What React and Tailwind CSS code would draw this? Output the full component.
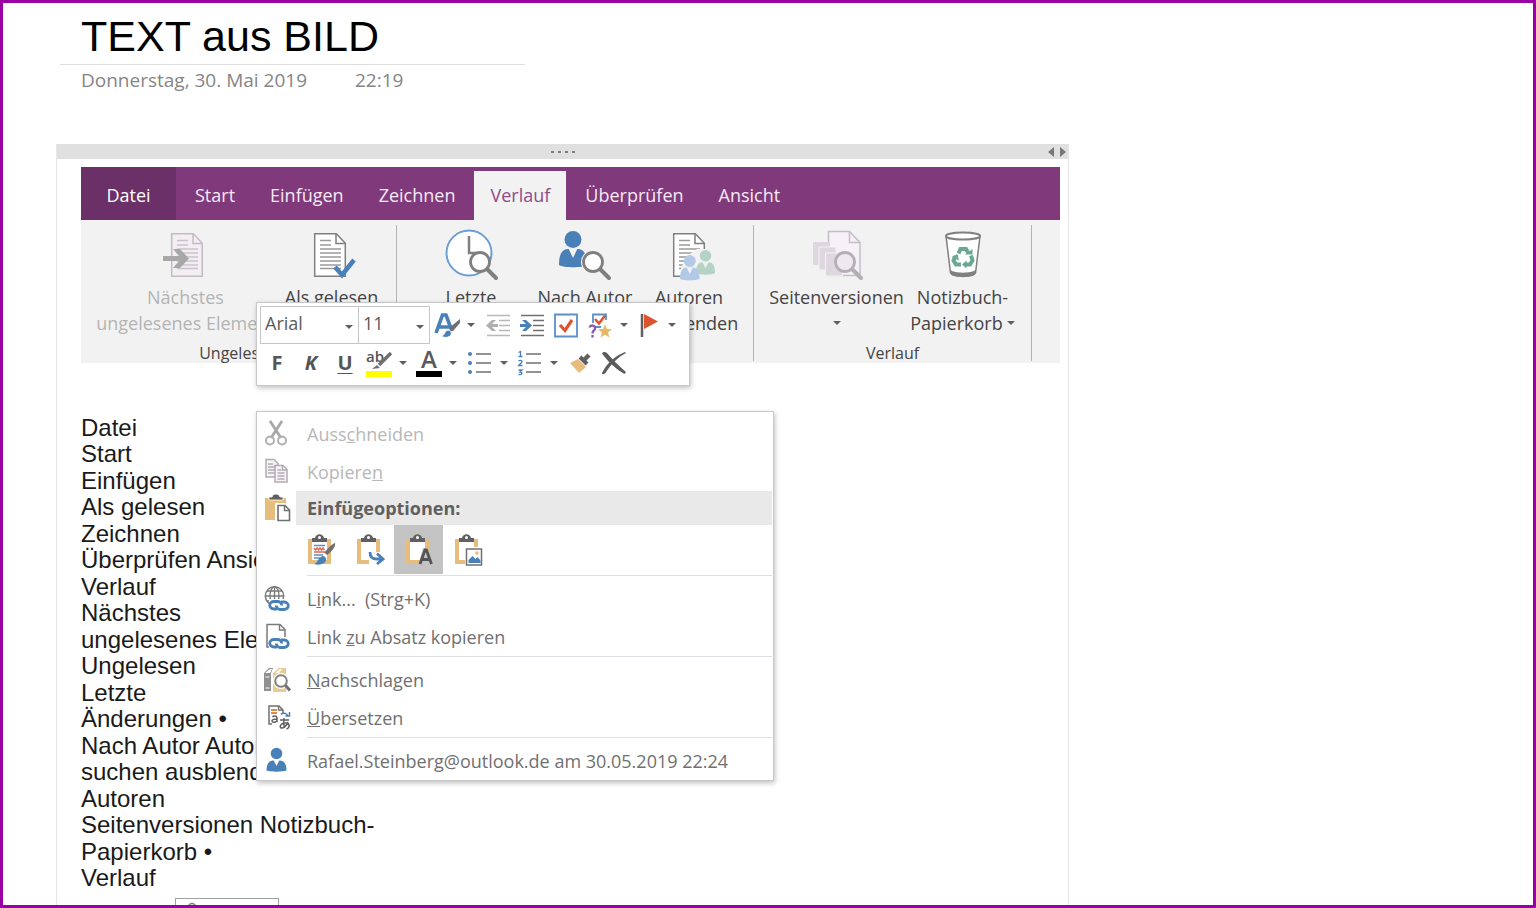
import clsx from 'clsx';

const tabs = ['Datei', 'Start', 'Einfügen', 'Zeichnen', 'Verlauf', 'Überprüfen', 'Ansicht'];

const noteLines = [
  'Datei',
  'Start',
  'Einfügen',
  'Als gelesen',
  'Zeichnen',
  'Überprüfen Ansicht',
  'Verlauf',
  'Nächstes',
  'ungelesenes Element',
  'Ungelesen',
  'Letzte',
  'Änderungen •',
  'Nach Autor Autoren',
  'suchen ausblenden',
  'Autoren',
  'Seitenversionen Notizbuch-',
  'Papierkorb •',
  'Verlauf',
];

function Caret({ className }) {
  return (
    <svg viewBox="0 0 8 4" className={clsx('h-1 w-2 shrink-0', className)} aria-hidden="true">
      <path d="M0 0h8L4 4z" fill="#606060" />
    </svg>
  );
}

/* ---------- ribbon icons ---------- */

function RibbonIcon({ children }) {
  return (
    <svg viewBox="0 0 56 52" className="h-[52px] w-14 shrink-0" fill="none" aria-hidden="true">
      {children}
    </svg>
  );
}

function Sheet({ x, stroke = '#808080', fill = '#fff', line = '#9a9a9a' }) {
  return (
    <g transform={`translate(${x} 4)`}>
      <path d="M.7.7h21.6l9 9.500v33H.7z" fill={fill} stroke={stroke} strokeWidth="1.500" />
      <path d="M22 1v9.500h9" stroke={stroke} strokeWidth="1.500" />
      <path d="M6 7.500h11M6 12h11M6 16h21M6 20h21M6 24h21M6 28h21M6 32h21M6 35.500h21" stroke={line} strokeWidth="1.300" />
    </g>
  );
}

function Lens({ cx, cy, stroke = '#7f7f7f', fill = '#fff' }) {
  return (
    <g stroke={stroke}>
      <path d={`M${cx + 7} ${cy + 7}l9 9`} strokeWidth="4" strokeLinecap="round" />
      <circle cx={cx} cy={cy} r="9.500" fill={fill} strokeWidth="2.800" />
    </g>
  );
}

function Person({ x, y, scale = 1, fill, gap = '#f2f2f2' }) {
  return (
    <g transform={`translate(${x} ${y}) scale(${scale})`}>
      <circle cx="14" cy="8.500" r="8.500" fill={fill} />
      <path d="M0 34c0-9 2-15 8-16h12c6 1 8 7 8 16-4 3-24 3-28 0z" fill={fill} />
      <path d="M9.500 17.500h9L14 27z" fill={gap} />
    </g>
  );
}

function NextUnreadIcon() {
  return (
    <RibbonIcon>
      <Sheet x={13} stroke="#c4bcc4" fill="#f4edf4" line="#cbc3cb" />
      <path d="M5 27h16l-6-7h7l9 9.500-9 9.500h-7l6-7H5z" fill="#a8a8a8" />
    </RibbonIcon>
  );
}

function MarkReadIcon() {
  return (
    <RibbonIcon>
      <Sheet x={10} />
      <path d="M31 38l7 8 12-15" stroke="#4a80b8" strokeWidth="4.500" />
    </RibbonIcon>
  );
}

function RecentIcon() {
  return (
    <RibbonIcon>
      <circle cx="26" cy="24" r="22.500" fill="#fff" stroke="#6d9ed2" strokeWidth="2" />
      <path d="M26 7v17h8" stroke="#808080" strokeWidth="2.500" />
      <Lens cx={37} cy={33} />
    </RibbonIcon>
  );
}

function ByAuthorIcon() {
  return (
    <RibbonIcon>
      <Person x={2} y={2} fill="#4a80b8" />
      <circle cx="36" cy="33" r="12" fill="#f2f2f2" />
      <Lens cx={36} cy={33} />
    </RibbonIcon>
  );
}

function HideAuthorsIcon() {
  return (
    <RibbonIcon>
      <Sheet x={12} />
      <path d="M36 20h14v12h4v18H20V39l6-12z" fill="#f2f2f2" />
      <Person x={35} y={21} scale={0.68} fill="#b5d3c5" />
      <Person x={19} y={26} scale={0.7} fill="#b3cae6" />
    </RibbonIcon>
  );
}

function VersionsIcon() {
  return (
    <RibbonIcon>
      <path d="M19.500 2.500h21l10.500 11v33h-31.500z" fill="#f6f1f6" stroke="#c6bec6" strokeWidth="1.500" />
      <path d="M40.500 3v10.500h10" stroke="#c6bec6" strokeWidth="1.500" />
      <path d="M4 13h17v23H4z" fill="#dfd7df" />
      <path d="M10 18h17v23H10z" fill="#dfd7df" stroke="#f2f2f2" />
      <path d="M16.500 24h17v23h-17z" fill="#dfd7df" stroke="#f2f2f2" />
      <Lens cx={36} cy={33} stroke="#b5afb5" fill="#efe9ef" />
    </RibbonIcon>
  );
}

function BinIcon() {
  return (
    <RibbonIcon>
      <path d="M11 7l4.500 37c2 4 23 4 25 0L45 7z" fill="#fff" stroke="#808080" strokeWidth="1.500" />
      <path d="M15.500 41c4 3.500 21 3.500 25 0l-.5 4.500c-3 3.500-21 3.500-24 0z" fill="#808080" />
      <ellipse cx="28" cy="7" rx="17" ry="3.500" fill="#fff" stroke="#808080" strokeWidth="2" />
      <path d="M23.500 24.500l2-4.500h5.500l2.500 4.500M36 26.500l1.500 5-2.500 4h-5M26 35.500h-5l-2.500-4 2-4.500" stroke="#6aa893" strokeWidth="4" />
      <path d="M30 25.500h7.500V20zM31.500 31.500v8l-4.500-4zM16.500 28l6-3 1.500 6.500z" fill="#6aa893" />
    </RibbonIcon>
  );
}

/* ---------- ribbon ---------- */

function RibbonButton({ icon, lines, caret, disabled, className }) {
  return (
    <button type="button" disabled={disabled} className={clsx('flex shrink-0 flex-col items-center pt-1', disabled ? 'text-[#b4b4b4]' : 'text-[#444444]', className)}>
      {icon}
      <span className="mt-[3px] text-[18px] leading-[26px] whitespace-nowrap">{lines[0]}</span>
      <span className="flex h-[26px] items-center gap-1 text-[18px] leading-[26px] whitespace-nowrap">
        {lines[1]}
        {caret ? <Caret /> : null}
      </span>
    </button>
  );
}

function RibbonGroup({ label, className, children }) {
  return (
    <section aria-label={label} className={clsx('flex h-[136px] shrink-0 flex-col justify-between border-r border-[#b4b4b4]', className)}>
      <div className="flex justify-center">{children}</div>
      <div className="text-center text-base leading-[16px] text-[#444444]">{label}</div>
    </section>
  );
}

function Ribbon() {
  return (
    <div>
      <nav className="flex h-[53px] items-end gap-[3px] bg-[#80397b] text-[18px]">
        {tabs.map((tab) => (
          <button
            key={tab}
            type="button"
            className={clsx(
              'pb-px',
              tab === 'Datei' ? 'h-[53px] w-[95px] bg-[#6c3068] pt-1 text-white' : 'h-[49px] px-4',
              tab === 'Verlauf' && 'bg-[#f2f2f2] text-[#8f4b8a]',
              tab !== 'Datei' && tab !== 'Verlauf' && 'text-[#f5e9f4]',
            )}
          >
            {tab}
          </button>
        ))}
      </nav>
      <div className="flex h-[143px] overflow-hidden bg-[#f2f2f2] pt-[5px]">
        <RibbonGroup label="Ungelesen" className="w-[316px]">
          <RibbonButton icon={<NextUnreadIcon />} lines={['Nächstes', 'ungelesenes Element']} disabled className="w-[198px]" />
          <RibbonButton icon={<MarkReadIcon />} lines={['Als gelesen', 'markieren']} caret className="w-[94px]" />
          <span className="w-3" />
        </RibbonGroup>
        <RibbonGroup label="Autoren" className="w-[357px]">
          <RibbonButton icon={<RecentIcon />} lines={['Letzte', 'Änderungen']} caret className="w-[116px]" />
          <RibbonButton icon={<ByAuthorIcon />} lines={['Nach Autor', 'suchen']} className="w-[112px]" />
          <RibbonButton icon={<HideAuthorsIcon />} lines={['Autoren', 'ausblenden']} className="w-[96px]" />
        </RibbonGroup>
        <RibbonGroup label="Verlauf" className="w-[278px]">
          <RibbonButton icon={<VersionsIcon />} lines={['Seitenversionen', '']} caret className="w-[140px]" />
          <RibbonButton icon={<BinIcon />} lines={['Notizbuch-', 'Papierkorb']} caret className="w-[112px]" />
        </RibbonGroup>
      </div>
    </div>
  );
}

/* ---------- mini toolbar ---------- */

function ToolButton({ label, children }) {
  return (
    <button type="button" aria-label={label} className="flex h-[34px] w-[34px] shrink-0 items-center justify-center">
      {children}
    </button>
  );
}

function MenuArrow({ label }) {
  return (
    <button type="button" aria-label={label} className="flex h-[34px] w-[14px] shrink-0 items-center justify-center">
      <Caret />
    </button>
  );
}

function ToolIcon({ children }) {
  return (
    <svg viewBox="0 0 28 28" className="h-7 w-7" fill="none" aria-hidden="true">
      {children}
    </svg>
  );
}

function FontSelect({ label, value, options, className }) {
  return (
    <div className={clsx('relative h-[38px] border border-[#c6c6c6]', className)}>
      <select aria-label={label} defaultValue={value} className="h-full w-full appearance-none bg-white pb-1 pl-1 text-[18px] text-[#5a5a5a] outline-none">
        {options.map((option) => (
          <option key={option}>{option}</option>
        ))}
      </select>
      <Caret className="pointer-events-none absolute top-[18px] right-[5px]" />
    </div>
  );
}

function MiniToolbar() {
  return (
    <div role="toolbar" aria-label="Formatierung" className="absolute top-[158px] left-[199px] w-[434px] border border-[#c8c8c8] bg-white pt-[3px] pb-[3px] pl-[3px] shadow-[1px_2px_5px_rgba(0,0,0,0.25)]">
      <div className="flex h-[38px] items-center">
        <FontSelect label="Schriftart" value="Arial" options={['Arial', 'Calibri']} className="w-[99px]" />
        <FontSelect label="Schriftgrad" value="11" options={['10', '11', '12']} className="-ml-px w-[72px]" />
        <ToolButton label="Formatvorlagen">
          <ToolIcon>
            <path d="M3 22L9.500 4h3.500l6 16M6 16h10" stroke="#4a80b8" strokeWidth="3.600" />
            <path d="M27 8v4l-7 8-4-3z" fill="#707070" />
            <path d="M8 25c4 0 3-5 7-6 3 0 4 3 3 5-2 3-7 3-10 1z" fill="#4a80b8" stroke="#fff" />
          </ToolIcon>
        </ToolButton>
        <MenuArrow label="Weitere Formatvorlagen" />
        <div className="w-[3px]" />
        <ToolButton label="Einzug verkleinern">
          <ToolIcon>
            <path d="M3 4.500h23M15 9.500h11M15 14.500h11M15 19.500h11M3 24.500h23" stroke="#b8b8b8" strokeWidth="1.500" />
            <path d="M2 14.500l6-5.500h4l-4 4h6v3H8l4 4H8z" fill="#b0b0b0" />
          </ToolIcon>
        </ToolButton>
        <ToolButton label="Einzug vergrößern">
          <ToolIcon>
            <path d="M3 4.500h23M15 9.500h11M15 14.500h11M15 19.500h11M3 24.500h23" stroke="#707070" strokeWidth="1.500" />
            <path d="M14 14.500L8 9H4l4 4H2v3h6l-4 4h4z" fill="#4a80b8" />
          </ToolIcon>
        </ToolButton>
        <ToolButton label="Aufgabe">
          <ToolIcon>
            <path d="M3 3.500h22v22H3z" stroke="#5b8fca" strokeWidth="1.800" />
            <path d="M8 14l5 5.500L20 9" stroke="#e0532f" strokeWidth="3.200" />
          </ToolIcon>
        </ToolButton>
        <ToolButton label="Kategorien">
          <ToolIcon>
            <path d="M7 12V3.500h13V9M10 16h5" stroke="#5b8fca" strokeWidth="1.800" />
            <path d="M9 8l4 4.500 6-8" stroke="#e0532f" strokeWidth="2.600" />
            <path d="M3.500 16.500c1-3 6-2.500 5.500 1 0 2-2.500 2-2.500 5M6.500 24v2.500" stroke="#8d57b5" strokeWidth="2.300" />
            <path d="M19 13.500l2 4.500 5 .3-4 3.200 1.500 5-4.500-2.800-4.500 2.800 1.500-5-4-3.200 5-.3z" fill="#e9b864" />
          </ToolIcon>
        </ToolButton>
        <MenuArrow label="Weitere Kategorien" />
        <ToolButton label="Nachverfolgung">
          <ToolIcon>
            <path d="M8 3v23" stroke="#606060" strokeWidth="2.500" />
            <path d="M10 3l14 7.500L10 18z" fill="#dd5330" />
          </ToolIcon>
        </ToolButton>
        <MenuArrow label="Nachverfolgung wählen" />
      </div>
      <div className="flex h-[38px] items-center text-[20px] font-bold text-[#555555]">
        <ToolButton label="Fett">F</ToolButton>
        <ToolButton label="Kursiv">
          <span className="italic">K</span>
        </ToolButton>
        <ToolButton label="Unterstrichen">
          <span className="underline decoration-1 underline-offset-3">U</span>
        </ToolButton>
        <div className="flex gap-[2px]">
          <div className="flex">
            <ToolButton label="Texthervorhebungsfarbe">
              <span className="relative flex h-[28px] w-[26px] flex-col justify-between text-left">
                <span className="text-[15px] leading-[14px] font-semibold">ab</span>
                <span className="h-[6px] bg-[#ffff00]" />
                <svg viewBox="0 0 26 28" className="absolute inset-0" fill="none" aria-hidden="true">
                  <path d="M13 16L25 4" stroke="#707070" strokeWidth="3.500" />
                  <path d="M6 20l5-4 3 3z" fill="#707070" />
                </svg>
              </span>
            </ToolButton>
            <MenuArrow label="Hervorhebungsfarbe wählen" />
          </div>
          <div className="flex">
            <ToolButton label="Schriftfarbe">
              <span className="flex h-[28px] w-[26px] flex-col justify-between text-center">
                <span className="text-[24px] leading-[20px] font-semibold text-[#5a5a5a]">A</span>
                <span className="h-[6px] bg-black" />
              </span>
            </ToolButton>
            <MenuArrow label="Schriftfarbe wählen" />
          </div>
          <div className="flex pl-px">
            <ToolButton label="Aufzählungszeichen">
              <ToolIcon>
                <path d="M10 5h15M10 14h15M10 23h15" stroke="#707070" strokeWidth="1.500" />
                <circle cx="4" cy="5" r="2" fill="#4a80b8" />
                <circle cx="4" cy="14" r="2" fill="#4a80b8" />
                <circle cx="4" cy="23" r="2" fill="#4a80b8" />
              </ToolIcon>
            </ToolButton>
            <MenuArrow label="Aufzählung wählen" />
          </div>
          <div className="flex">
            <ToolButton label="Nummerierung">
              <ToolIcon>
                <path d="M10 5h15M10 14h15M10 23h15" stroke="#707070" strokeWidth="1.500" />
                <path d="M2.500 3.500L4.500 2.500v5M2.500 7.500h4M2.500 12c1-1 3.500-1 3.500.5S3 15.500 2.500 16.500h4M2.500 21h3.500l-2 2c3 0 2.500 3-1.500 2.500" stroke="#4a80b8" strokeWidth="1.300" />
              </ToolIcon>
            </ToolButton>
            <MenuArrow label="Nummerierung wählen" />
          </div>
          <div className="flex">
            <ToolButton label="Format übertragen">
              <ToolIcon>
                <path d="M4 14l8-4 8 8-7 6z" fill="#e6bd7c" />
                <path d="M14 8l7 7" stroke="#606060" strokeWidth="4" />
                <path d="M18 11l5-5" stroke="#606060" strokeWidth="4.500" />
              </ToolIcon>
            </ToolButton>
            <ToolButton label="Löschen">
              <ToolIcon>
                <path d="M2 4.500c1-2 3-2 5-.5 5 6 11 12 19 19l-1.500 2C16 20 8 13 2 4.500z" fill="#5c5c5c" />
                <path d="M26 4C18 8 11 15 5.500 24c-1 1.500-4.500 1.500-3.500 0C7 14 15 7 25 3z" fill="#5c5c5c" />
              </ToolIcon>
            </ToolButton>
          </div>
        </div>
      </div>
    </div>
  );
}

/* ---------- context menu ---------- */

function MenuIcon({ children }) {
  return (
    <svg viewBox="0 0 28 28" className="h-7 w-7" fill="none" aria-hidden="true">
      {children}
    </svg>
  );
}

function MenuItem({ icon, disabled, children }) {
  return (
    <button type="button" role="menuitem" disabled={disabled} className={clsx('flex h-[38px] w-full items-center text-left whitespace-pre', disabled ? 'text-[#b8b8b8]' : 'text-[#707070]')}>
      <span className="flex w-[39px] shrink-0 justify-center">{icon}</span>
      <span className="pl-[11px]">{children}</span>
    </button>
  );
}

function Separator() {
  return <div role="separator" className="mr-px mb-1 ml-[50px] h-px bg-[#dcdfe3]" />;
}

function Chain() {
  return (
    <g stroke="#4a80b8" strokeWidth="2.800">
      <path d="M14 24h-3a4 3.500 0 0 1 0-7.500h4a4 3.500 0 0 1 3.500 4" />
      <path d="M18 17h3a4 3.500 0 0 1 0 7.500h-4a4 3.500 0 0 1-3.500-4" />
    </g>
  );
}

function Clipboard() {
  return (
    <>
      <path d="M2 5h23v25H2z" fill="#e6bd7c" />
      <path d="M6 5h15v21H6z" fill="#fff" />
      <path d="M6 8V4h3c1-5 8-5 9 0h3v4z" fill="#606060" />
      <circle cx="13.500" cy="3.500" r="1.500" fill="#fff" />
    </>
  );
}

function PasteButton({ label, active, children }) {
  return (
    <button type="button" aria-label={label} className={clsx('flex h-[49px] w-[49px] items-center justify-center', active && 'bg-[#c3c3c3]')}>
      <svg viewBox="0 0 30 32" className="h-8 w-[30px]" fill="none" aria-hidden="true">
        <Clipboard />
        {children}
      </svg>
    </button>
  );
}

const cutIcon = (
  <MenuIcon>
    <path d="M7 1l11 17M19 1L8 18" stroke="#a8a8a8" strokeWidth="2.800" />
    <circle cx="7" cy="20.500" r="4" stroke="#b0b0b0" strokeWidth="2" />
    <circle cx="19" cy="20.500" r="4" stroke="#b0b0b0" strokeWidth="2" />
  </MenuIcon>
);

const copyIcon = (
  <MenuIcon>
    <path d="M3 1.500h8l4 4V19H3z" fill="#f6f2f6" stroke="#b4acb4" strokeWidth="1.500" />
    <path d="M5 6h5M5 9h7M5 12h7M5 15h7" stroke="#b4acb4" strokeWidth="1.300" />
    <path d="M12 7.500h8l4 4V24H12z" fill="#f6f2f6" stroke="#b4acb4" strokeWidth="1.500" />
    <path d="M19.500 8v4H24M14.500 12h4M14.500 15h7M14.500 18h7M14.500 21h7" stroke="#b4acb4" strokeWidth="1.300" />
  </MenuIcon>
);

const pasteIcon = (
  <MenuIcon>
    <path d="M2 4h21v22H2z" fill="#e6bd7c" />
    <path d="M6 6V3h3c1-4 7-4 8 0h3v3z" fill="#606060" stroke="#fff" strokeWidth=".8" />
    <path d="M13.500 10.500h8l5 5V27h-13z" fill="#fff" stroke="#fff" strokeWidth="3" />
    <path d="M15 11.500h7l4.500 4.500v10.500H15z" fill="#fff" stroke="#707070" strokeWidth="1.600" />
    <path d="M21.500 12v4.500H26" stroke="#707070" strokeWidth="1.400" />
  </MenuIcon>
);

const webLinkIcon = (
  <MenuIcon>
    <circle cx="11.500" cy="11" r="9.200" stroke="#7a7a7a" strokeWidth="1.500" />
    <ellipse cx="11.500" cy="11" rx="4.500" ry="9.200" stroke="#7a7a7a" strokeWidth="1.400" />
    <path d="M2 11h19M4 6h15M4 16h15M11.500 2v18" stroke="#7a7a7a" strokeWidth="1.400" />
    <path d="M6 14h20v12H6z" fill="#fff" />
    <Chain />
  </MenuIcon>
);

const pageLinkIcon = (
  <MenuIcon>
    <path d="M8 24H4V1.500h13l5 5V15" stroke="#7a7a7a" strokeWidth="1.500" />
    <path d="M16.500 2v5H22" stroke="#7a7a7a" strokeWidth="1.400" />
    <path d="M6 14h20v12H6z" fill="#fff" />
    <Chain />
  </MenuIcon>
);

const lookupIcon = (
  <MenuIcon>
    <path d="M1 7l5-5h4L8 7v18H1z" fill="#909090" />
    <path d="M2 7l5-4h2L7 7z" fill="#fff" />
    <path d="M2.500 11h4M2.500 22h4" stroke="#d8d8d8" strokeWidth="1.500" />
    <path d="M10 7l6-5h7v24H10z" fill="#ecc992" />
    <path d="M12 7l5-4h2l-3 4z" fill="#fff" />
    <circle cx="18" cy="15" r="8" fill="#fff" />
    <path d="M22 19l5 5.500" stroke="#707070" strokeWidth="3" />
    <circle cx="18" cy="15" r="5.800" fill="#fff" stroke="#808080" strokeWidth="2" />
  </MenuIcon>
);

const translateIcon = (
  <MenuIcon>
    <path d="M9 20H6V2h10l4 4v3" stroke="#707070" strokeWidth="1.500" />
    <path d="M15.500 2v4H20" stroke="#707070" strokeWidth="1.300" />
    <path d="M8 6h6M8 9h6" stroke="#e08a52" strokeWidth="1.800" />
    <path d="M9.500 13c1-1.500 4.500-1.500 4.500 1v4M14 15c-3 0-5 .5-5 2s3 2 5 0" stroke="#606060" strokeWidth="1.500" />
    <path d="M18 10c3-1.500 6-1 7 2.500M22.500 12h4v-4" stroke="#4a80b8" strokeWidth="1.500" />
    <path d="M17 16h9M21 14c-.5 4-.5 7 .5 10M25 18c-1 4-5 6.500-7 6-2-1 0-5 4-5 5-.5 5.500 4.500 1.500 6" stroke="#606060" strokeWidth="1.500" />
  </MenuIcon>
);

const authorIcon = (
  <MenuIcon>
    <circle cx="13.500" cy="6.500" r="5.800" fill="#4a80b8" />
    <path d="M3.500 23.500c0-6 2-9.500 6-10h8c4 .5 6 4 6 10-3 1.500-17 1.500-20 0z" fill="#4a80b8" />
    <path d="M10.500 13h6l-3 6z" fill="#fff" />
  </MenuIcon>
);

function ContextMenu() {
  return (
    <div role="menu" className="absolute top-[267px] left-[199px] w-[518px] border border-[#c8c8c8] bg-white pt-[3px] text-[18px] shadow-[1px_2px_5px_rgba(0,0,0,0.25)]">
      <MenuItem icon={cutIcon} disabled>Auss<u>c</u>hneiden</MenuItem>
      <MenuItem icon={copyIcon} disabled>Kopiere<u>n</u></MenuItem>
      <div className="flex h-[34px] items-center">
        <span className="flex w-[39px] justify-center">{pasteIcon}</span>
        <span className="mr-px flex h-full flex-1 items-center bg-[#e9e9e9] pl-[11px] font-bold text-[#606060]">Einfügeoptionen:</span>
      </div>
      <div className="flex h-[50px] pl-[39px]">
        <PasteButton label="Ursprüngliche Formatierung beibehalten">
          <path d="M8 11.500h11M8 21h9M8 24h6" stroke="#5b8fca" strokeWidth="1.300" />
          <path d="M8 14l1.500 2 1.500-2 1.500 2 1.500-2 1.500 2 1.500-2 1.500 2M8 18h11" stroke="#e06a50" strokeWidth="1.500" />
          <path d="M29 9c1 4-4 9-8 12l-2.500-2.500C22 14 26 10 29 9z" fill="#707070" />
          <path d="M8 30c4-1 4-7 9-8 4 1 4 5 1 7s-7 2-10 1z" fill="#4a80b8" />
        </PasteButton>
        <PasteButton label="Formatierung zusammenführen">
          <path d="M14 18h13v14H14z" fill="#fff" />
          <path d="M15 18c0 5 2 7 6 7h6M22 19.500l6 5.500-6 5" stroke="#4a80b8" strokeWidth="2.800" />
        </PasteButton>
        <PasteButton label="Nur den Text übernehmen" active>
          <path d="M14 32l5-18h4l6 18z" fill="#c3c3c3" />
          <path d="M16 30l5-14h1.400L27.500 30M18 25.500h7.500" stroke="#555555" strokeWidth="2.800" />
        </PasteButton>
        <PasteButton label="Grafik">
          <path d="M12 13h17v19H12z" fill="#fff" />
          <path d="M13.500 15h15v16h-15z" fill="#fff" stroke="#707070" strokeWidth="1.500" />
          <path d="M15.500 29v-3l4-4 3 3 2-2 3 3.500V29z" fill="#4a80b8" />
          <circle cx="24" cy="19" r="1.700" fill="#ecb877" />
        </PasteButton>
      </div>
      <Separator />
      <MenuItem icon={webLinkIcon}>L<u>i</u>nk...  (Strg+K)</MenuItem>
      <MenuItem icon={pageLinkIcon}>Link <u>z</u>u Absatz kopieren</MenuItem>
      <Separator />
      <MenuItem icon={lookupIcon}><u>N</u>achschlagen</MenuItem>
      <MenuItem icon={translateIcon}><u>Ü</u>bersetzen</MenuItem>
      <Separator />
      <MenuItem icon={authorIcon}>Rafael.Steinberg@outlook.de am 30.05.2019 22:24</MenuItem>
    </div>
  );
}

/* ---------- page ---------- */

export default function App() {
  return (
    <main className="h-screen overflow-hidden border-3 border-[#9a00a6] bg-white font-['Open_Sans',sans-serif]">
      <header>
        <h1 className="ml-[57px] h-[62px] max-w-[465px] border-b border-[#dedede] pl-[21px] font-['Liberation_Sans',sans-serif] text-[43px] leading-[66px] text-black">TEXT aus BILD</h1>
        <div className="flex h-[30px] items-center gap-12 pl-[78px] text-[19px] text-[#858585]">
          <span>Donnerstag, 30. Mai 2019</span>
          <time>22:19</time>
        </div>
      </header>

      <article className="relative mt-[49px] ml-[53px] w-full max-w-[1013px] border-x border-[#e6e6e6]">
        <div className="relative flex h-[15px] items-center justify-center bg-[#e0e0e0]">
          <div className="flex gap-[4px]">
            <span className="h-[2px] w-[3px] bg-[#808080]" />
            <span className="h-[2px] w-[3px] bg-[#808080]" />
            <span className="h-[2px] w-[3px] bg-[#808080]" />
            <span className="h-[2px] w-[3px] bg-[#808080]" />
          </div>
          <svg viewBox="0 0 18 10" className="absolute right-[2px] h-[10px] w-[18px]" aria-hidden="true">
            <path d="M6 0v10L0 5zM12 0v10l6-5z" fill="#787878" />
          </svg>
        </div>
        <div className="pt-2 pr-2 pl-6">
          <Ribbon />
          <div className="mt-[52px] font-['Liberation_Sans',sans-serif] text-[24px] leading-[26px] text-[#1a1a1a]">
            {noteLines.map((line, i) => (
              <p key={i} className="even:pb-px">{line}</p>
            ))}
          </div>
          <div className="mt-[6px] ml-[94px] h-10 w-[104px] border border-[#a0a0a0] pt-[3px] pl-[11px]">
            <svg viewBox="0 0 10 10" className="size-[10px]" fill="none" aria-hidden="true">
              <circle cx="5" cy="5" r="3.500" stroke="#808080" strokeWidth="1.500" />
            </svg>
          </div>
        </div>
        <MiniToolbar />
        <ContextMenu />
      </article>
    </main>
  );
}
